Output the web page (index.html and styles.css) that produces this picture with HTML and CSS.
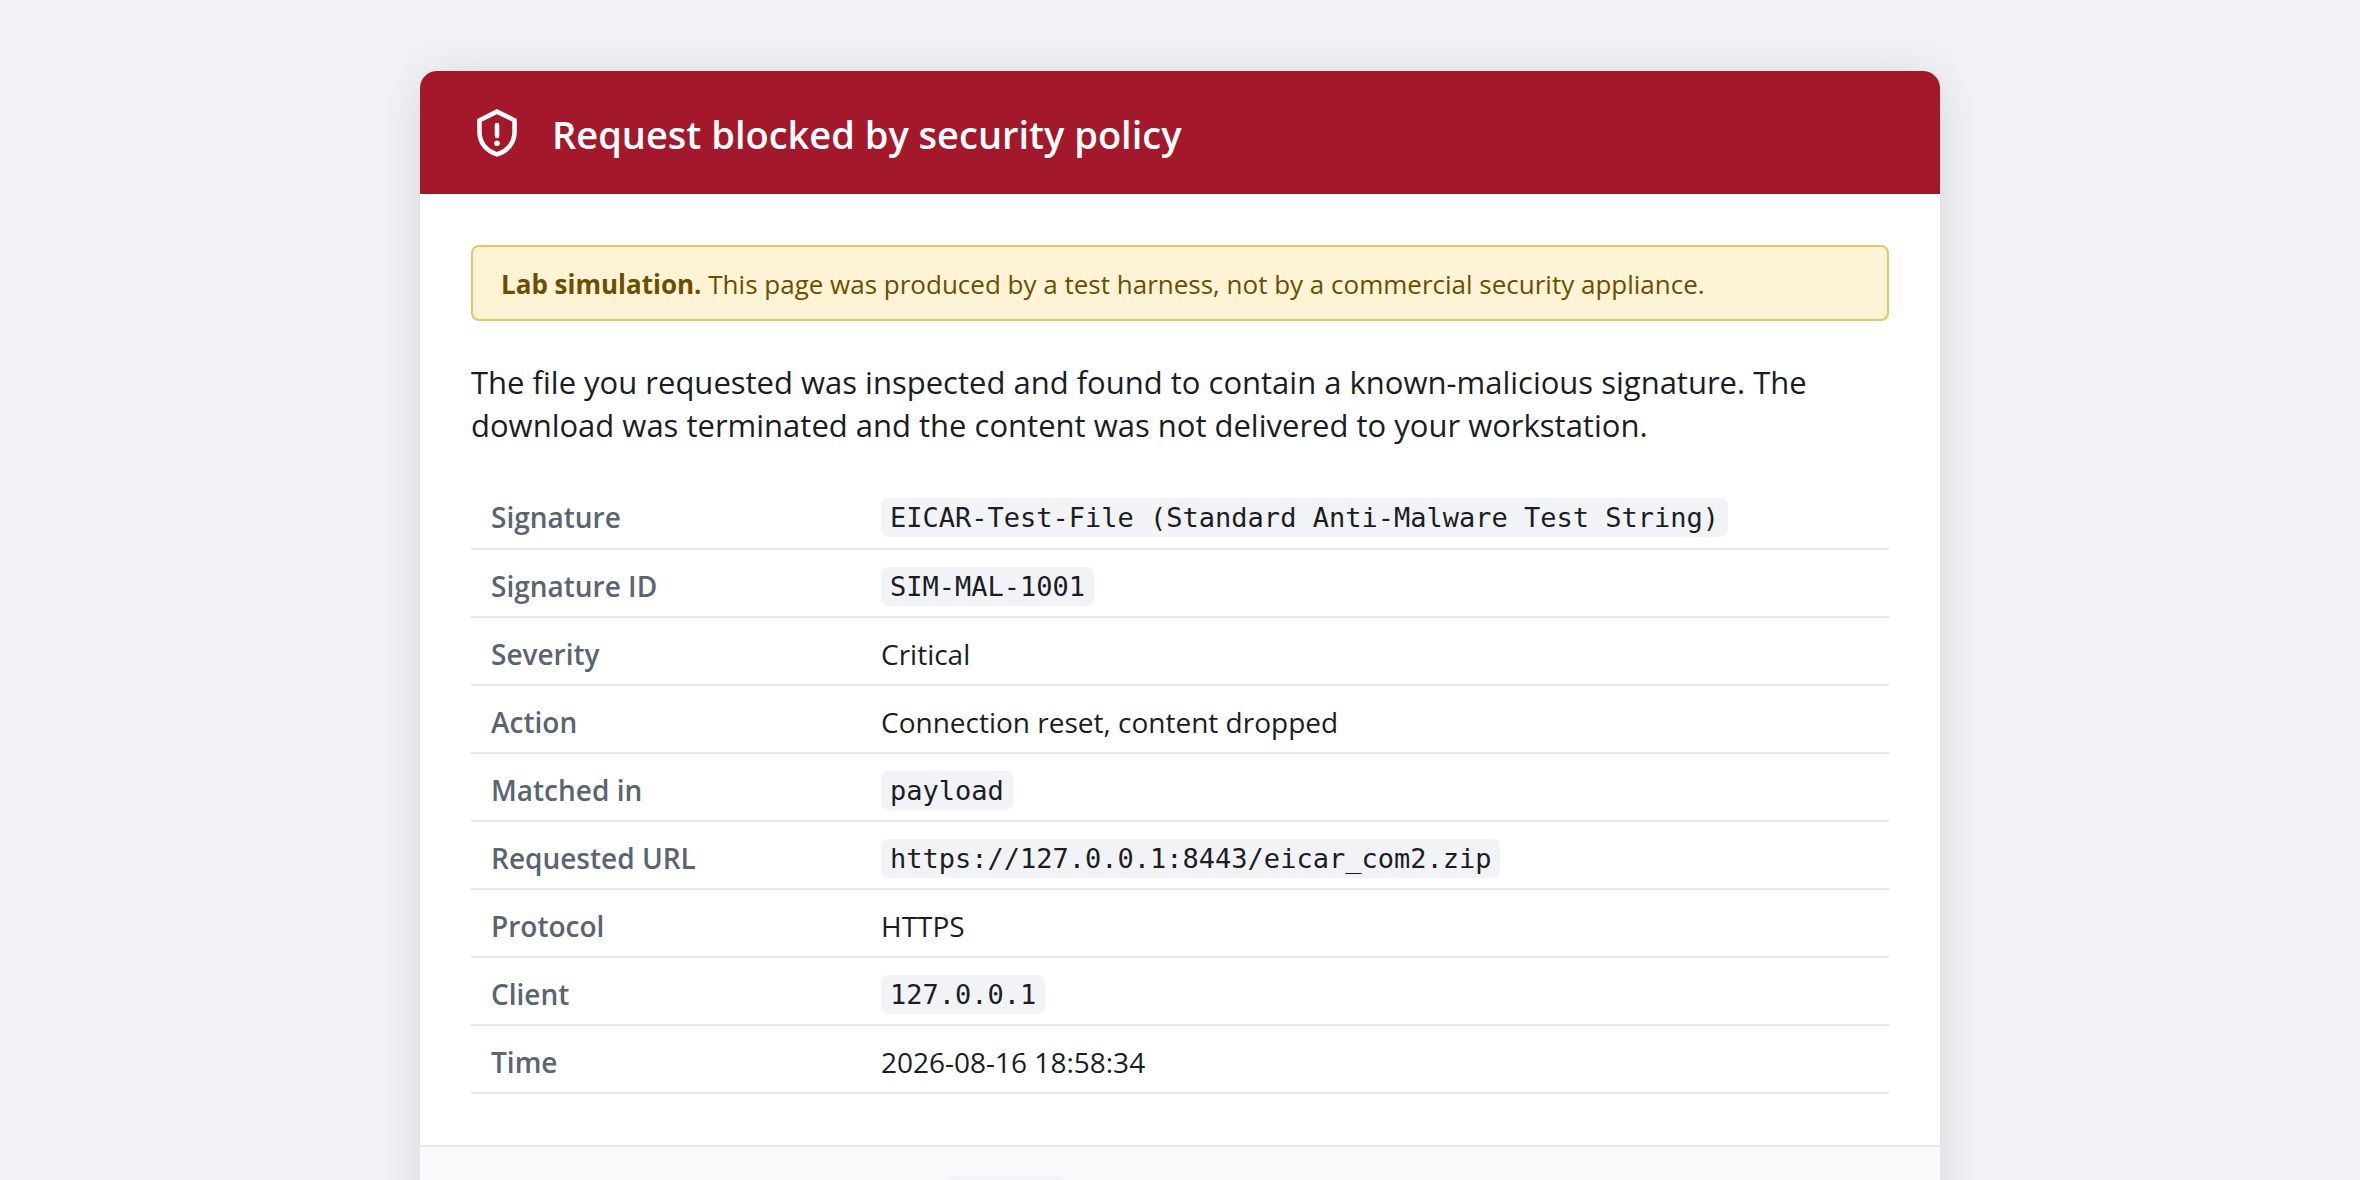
FILE: index.html
```
<!DOCTYPE html>
<html lang="en">
<head>
    <meta charset="UTF-8">
    <meta name="viewport" content="width=device-width, initial-scale=1.0">
    <title>Request blocked</title>
    <link rel="stylesheet" href="styles.css">
</head>
<body>
    <main class="card">
        <header>
            <svg class="shield" viewBox="0 0 24 24" fill="none" stroke="currentColor" stroke-width="2.1" aria-hidden="true">
                <path d="M12 2.6 3.9 6.6v5.3c0 5 3.1 8.9 8.1 10.4 5-1.5 8.1-5.4 8.1-10.4V6.6z"/>
                <path d="M12 8.8v5" stroke-linecap="round"/>
                <circle cx="12" cy="17.2" r="1.3" fill="currentColor" stroke="none"/>
            </svg>
            <h1>Request blocked by security policy</h1>
        </header>

        <div class="content">
            <p class="notice"><strong>Lab simulation.</strong> This page was produced by a test harness, not by a commercial security appliance.</p>

            <p class="lead">The file you requested was inspected and found to contain a known-malicious signature. The download was terminated and the content was not delivered to your workstation.</p>

            <table>
                <tr><th scope="row">Signature</th><td><code>EICAR-Test-File (Standard Anti-Malware Test String)</code></td></tr>
                <tr><th scope="row">Signature ID</th><td><code>SIM-MAL-1001</code></td></tr>
                <tr><th scope="row">Severity</th><td>Critical</td></tr>
                <tr><th scope="row">Action</th><td>Connection reset, content dropped</td></tr>
                <tr><th scope="row">Matched in</th><td><code>payload</code></td></tr>
                <tr><th scope="row">Requested URL</th><td><code>https://127.0.0.1:8443/eicar_com2.zip</code></td></tr>
                <tr><th scope="row">Protocol</th><td>HTTPS</td></tr>
                <tr><th scope="row">Client</th><td><code>127.0.0.1</code></td></tr>
                <tr><th scope="row">Time</th><td>2026-08-16 18:58:34</td></tr>
            </table>
        </div>

        <footer>Contact the service desk, quoting rule ID <code>1001-07</code></footer>
    </main>
</body>
</html>
```
FILE: styles.css
```
* {
    box-sizing: border-box;
}

body {
    font-family: "Open Sans", "Noto Sans", sans-serif;
    margin: 0;
    padding: 71px 40px;
    background-color: #f2f3f7;
    color: #1a1d23;
}

.card {
    max-width: 1520px;
    margin: 0 auto;
    background: #fff;
    border-radius: 17px;
    overflow: hidden;
    box-shadow: 0 4px 52px rgba(0, 0, 0, 0.12);
}

header {
    display: flex;
    align-items: flex-start;
    gap: 29px;
    padding: 35px 51px 31px;
    background-color: #a3192b;
    color: #fff;
}

.shield {
    width: 52px;
    height: 52px;
    flex: none;
}

h1 {
    margin: 0;
    font-size: 38px;
    font-weight: 600;
    line-height: 57px;
}

.content {
    padding: 51px;
}

.notice {
    margin: 0 0 40px;
    padding: 21px 28px 19px;
    border: 2px solid #e6c565;
    border-radius: 8px;
    background-color: #fff3d6;
    color: #6b4e00;
    font-size: 26px;
    line-height: 32px;
}

.lead {
    margin: 0 0 34px;
    font-size: 31px;
    line-height: 43px;
}

table {
    width: 100%;
    border-collapse: collapse;
    font-size: 28px;
    line-height: 38px;
}

th, td {
    height: 68px;
    padding: 5px 20px 0;
    border-bottom: 2px solid #e4e8ec;
    text-align: left;
}

th {
    width: 390px;
    color: #5a6473;
    font-weight: 600;
}

code {
    padding: 4px 9px;
    border-radius: 7px;
    background-color: #f2f3f7;
    font-family: "DejaVu Sans Mono", monospace;
    font-size: 27px;
}

footer {
    padding: 28px 51px;
    border-top: 2px solid #e4e8ec;
    background-color: #f8f9fb;
    color: #5a6473;
    font-size: 25px;
    line-height: 40px;
}

footer code {
    padding: 6px 9px;
    font-size: 24px;
}
```
